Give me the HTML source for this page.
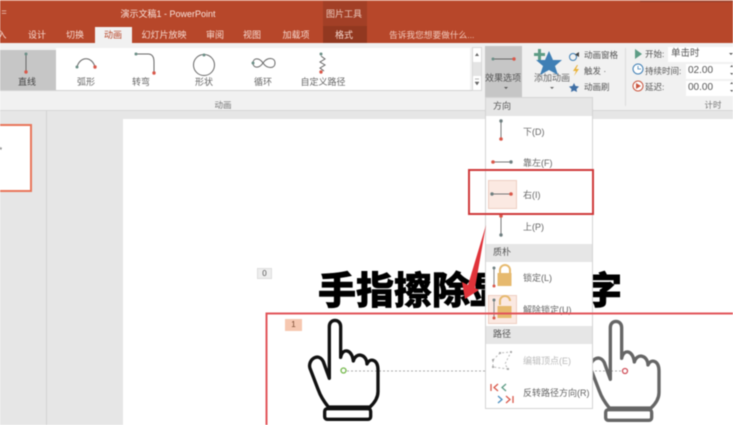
<!DOCTYPE html>
<html><head><meta charset="utf-8">
<style>
html,body{margin:0;padding:0;background:#fff}
#p{position:relative;width:733px;height:425px;overflow:hidden;background:#e6e6e6;font-family:"Liberation Sans","Noto Sans CJK SC",sans-serif;filter:blur(.4px)}
#p div{position:absolute}
.t{white-space:nowrap;line-height:14px;height:14px;transform:translate(-50%,calc(-50% + 1px))}
.l{white-space:nowrap;line-height:14px;height:14px;transform:translateY(calc(-50% + 1px))}
.tab{font-size:9px;color:#f6d8ce;top:34px}
.rb{font-size:9px;color:#666;top:81px}
.m{font-size:9px;color:#666;left:523px}
.h{left:486px;width:106px;height:18px;background:#e6e6e6;font-size:9px;color:#555;line-height:17px;text-indent:7px}
.r{font-size:8.500px;color:#555}
</style></head><body>
<div id="p">
<!-- title bar -->
<div style="left:0;top:0;width:733px;height:43px;background:#b7472a"></div>
<div style="left:0;top:0;width:733px;height:1px;background:#d98f78"></div>
<div style="left:640px;top:1px;width:93px;height:1px;background:#8f3a25"></div>
<div style="left:323px;top:1px;width:44px;height:25px;background:#a23f26"></div>
<div style="left:323px;top:26px;width:44px;height:17px;background:#923820"></div>
<div style="left:95px;top:27px;width:37px;height:19px;background:#f1f1f1"></div>
<div class="t" style="left:4px;top:11px;font-size:9px;color:#f6d8ce">=</div>
<div class="t" style="left:168px;top:13px;font-size:9px;color:#f8e3dc">演示文稿1 - PowerPoint</div>
<div class="t" style="left:344px;top:13px;font-size:9px;color:#eccabd">图片工具</div>
<div class="t tab" style="left:2px">入</div>
<div class="t tab" style="left:37px">设计</div>
<div class="t tab" style="left:75px">切换</div>
<div class="t tab" style="left:113px;color:#b7472a">动画</div>
<div class="t tab" style="left:164px">幻灯片放映</div>
<div class="t tab" style="left:215px">审阅</div>
<div class="t tab" style="left:252px">视图</div>
<div class="t tab" style="left:296px">加载项</div>
<div class="t tab" style="left:344px">格式</div>
<div class="l" style="left:389px;top:34px;font-size:8.700px;color:#f2c9bb">告诉我您想要做什么...</div>
<!-- ribbon -->
<div style="left:0;top:43px;width:733px;height:67px;background:#f1f1f1"></div>
<div style="left:0;top:110px;width:733px;height:1px;background:#d6d6d6"></div>
<div style="left:0;top:50px;width:56px;height:40px;background:#c6c6c6"></div>
<div style="left:56px;top:48px;width:414px;height:42px;background:#fff"></div>
<div style="left:0;top:90px;width:472px;height:1px;background:#d2d2d2"></div>
<div style="left:472px;top:47px;width:10px;height:44px;background:#fff;border:1px solid #d8d8d8;box-sizing:border-box"></div>
<div style="left:473px;top:62px;width:8px;height:14px;background:#e4e4e4"></div>
<div style="left:485px;top:46px;width:37px;height:51px;background:#c6c6c6"></div>
<div style="left:625px;top:48px;width:1px;height:58px;background:#dcdcdc"></div>
<div style="left:668px;top:47px;width:65px;height:15px;background:#fff"></div>
<div style="left:686px;top:64px;width:47px;height:15px;background:#fff"></div>
<div style="left:686px;top:81px;width:47px;height:15px;background:#fff"></div>
<div class="t" style="left:27px;top:81px;font-size:9px;color:#444">直线</div>
<div class="t rb" style="left:86px">弧形</div>
<div class="t rb" style="left:141px">转弯</div>
<div class="t rb" style="left:204px">形状</div>
<div class="t rb" style="left:263px">循环</div>
<div class="t rb" style="left:323px">自定义路径</div>
<div class="t" style="left:223px;top:104px;font-size:8.500px;color:#777">动画</div>
<div class="t" style="left:713px;top:104px;font-size:8.500px;color:#777">计时</div>
<div class="t" style="left:503px;top:77px;font-size:9px;color:#555">效果选项</div>
<div class="t" style="left:552px;top:77px;font-size:9px;color:#666">添加动画</div>
<div class="l r" style="left:584px;top:54px">动画窗格</div>
<div class="l r" style="left:584px;top:70px">触发 ·</div>
<div class="l r" style="left:584px;top:86px">动画刷</div>
<div class="l r" style="left:645px;top:53px">开始:</div>
<div class="l r" style="left:671px;top:53px;font-size:9.500px">单击时</div>
<div class="l r" style="left:645px;top:70px">持续时间:</div>
<div class="l r" style="left:688px;top:70px;font-size:10px">02.00</div>
<div class="l r" style="left:645px;top:86px">延迟:</div>
<div class="l r" style="left:688px;top:87px;font-size:10px">00.00</div>
<!-- workspace -->
<div style="left:46px;top:111px;width:1px;height:314px;background:#d4d4d4"></div>
<div style="left:0;top:124px;width:30px;height:64px;background:#fff;border:2px solid #e8765a;border-left:0"></div>
<div class="l" style="left:-1px;top:150px;font-size:8px;color:#555">*</div>
<div style="left:123px;top:119px;width:610px;height:306px;background:#fff"></div>
<div class="l" style="left:318px;top:291px;height:48px;line-height:48px;font-size:38px;font-weight:900;color:#000;-webkit-text-stroke:.6px #000">手指擦除显示文字</div>
<div style="left:257px;top:268px;width:15px;height:11px;background:#eee;border:1px solid #ddd;box-sizing:border-box;font-size:8px;line-height:9px;text-align:center;color:#555">0</div>
<div style="left:285px;top:319px;width:17px;height:12px;background:#f6c7b0;font-size:8px;line-height:12px;text-align:center;color:#7a4a30">1</div>

<svg width="733" height="425" style="position:absolute;left:0;top:0">
 <defs>
  <path id="hand" d="M238 355V200C238 175 272 175 272 200V292C278 262 306 268 310 303C318 275 350 282 351 312C360 292 384 298 384 330V395C384 415 372 430 360 441H235C222 425 212 410 205 390L180 325C172 300 205 275 220 305Z"/>
 </defs>
 <line x1="343" y1="371" x2="625" y2="371" stroke="#aaa" stroke-width="1" stroke-dasharray="2 2"/>
 <g transform="translate(250 260) scale(.3333)" fill="none" stroke="#111" stroke-width="10" stroke-linejoin="round">
  <use href="#hand"/><rect x="224" y="446" width="138" height="32" rx="8"/>
 </g>
 <circle cx="343.500" cy="370.500" r="2.500" fill="#fff" stroke="#73b84a" stroke-width="1.300"/>
 <g transform="translate(531 261) scale(.3333)" fill="none" stroke="#666" stroke-width="10" stroke-linejoin="round">
  <use href="#hand"/><rect x="224" y="446" width="138" height="32" rx="8"/>
 </g>
 <circle cx="625" cy="371" r="2.500" fill="#fff" stroke="#d0505a" stroke-width="1.300"/>

 <g fill="none" stroke="#666" stroke-width="1">
  <line x1="26" y1="54" x2="26" y2="72"/>
  <path d="M77 67C80 56 92 56 95 67"/>
  <path d="M136 54H148C153 54 154 58 154 62V73"/>
  <circle cx="204" cy="65" r="10.500"/>
  <path d="M263 63C259 57 253 58 253 63C253 68 259 69 263 63C267 57 275 57 275 63C275 69 267 69 263 63Z"/>
  <path d="M321 56L325 59L320 62L325 65L320 68L324 71"/>
  <line x1="493" y1="59" x2="514" y2="59"/>
 </g>
 <g fill="#6b8f86">
  <circle cx="26" cy="54" r="1.500"/><circle cx="77" cy="67" r="1.500"/><circle cx="136" cy="54" r="1.500"/><circle cx="204" cy="55" r="1.500"/><circle cx="253" cy="63" r="1.500"/><circle cx="321" cy="54" r="1.500"/><circle cx="493" cy="59" r="1.500"/>
 </g>
 <g fill="#d9584a">
  <circle cx="26" cy="72" r="1.700"/><circle cx="95" cy="67" r="1.700"/><circle cx="154" cy="73" r="1.700"/><circle cx="321" cy="72" r="1.700"/><circle cx="514" cy="59" r="1.700"/>
 </g>
 <path d="M504 87h4l-2 2z" fill="#555"/>
 <path d="M550 87h4l-2 2z" fill="#666"/>
 <path d="M475 56l2-3 2 3z" fill="#666"/>
 <path d="M475 82l2 3 2-3zM475 79h4" fill="#666" stroke="#666" stroke-width=".5"/>
 <path d="M549 51L553 60L562 60L555 66L558 75L549 70L540 75L543 66L536 60L545 60Z" fill="#3f7fb5"/>
 <path d="M538 49h3v4h4v3h-4v4h-3v-4h-4v-3h4z" fill="#5d9c85"/>
 <circle cx="573" cy="57" r="3.500" fill="none" stroke="#3f7fb5"/>
 <path d="M579 52l-4 2.500 4 2.500z" fill="#444"/>
 <path d="M577 65l-4 6h3l-2 5 5-7h-3l2-4z" fill="#eab33a"/>
 <path d="M574 83l1.500 3 3.500 .5-2.500 2.500 .5 3-3-1.500-3 1.500 .5-3-2.500-2.500 3.500-.5z" fill="#3f6fa5"/>
 <path d="M635 49l7 5-7 5z" fill="#5d9c85"/>
 <circle cx="638" cy="69" r="5" fill="#fff" stroke="#3f7fb5"/><path d="M638 66v3h3" fill="none" stroke="#3f7fb5" stroke-width=".8"/>
 <circle cx="638" cy="86" r="5" fill="#fff" stroke="#c9553e"/><path d="M636 83l5 3-5 3z" fill="#c9553e"/>
 <path d="M729 53h4l-2 2z" fill="#555"/>
 <path d="M730 67l2-2 1 2zM730 73h3l-1 2zM730 84l2-2 1 2zM730 90h3l-1 2z" fill="#555"/>
</svg>

<!-- menu -->
<div style="left:485px;top:97px;width:108px;height:312px;background:#fff;border:1px solid #d4d4d4;box-sizing:border-box"></div>
<div class="h" style="top:98px">方向</div>
<div class="h" style="top:244px">质朴</div>
<div class="h" style="top:326px">路径</div>
<div style="left:488px;top:180px;width:29px;height:29px;background:#fbe9e2;border:1px solid #eecfc2;box-sizing:border-box"></div>
<div style="left:488px;top:295px;width:29px;height:29px;background:#fbe9e2;border:1px solid #eecfc2;box-sizing:border-box"></div>
<div class="l m" style="top:131px">下(D)</div>
<div class="l m" style="top:162px">靠左(F)</div>
<div class="l m" style="top:194px">右(I)</div>
<div class="l m" style="top:226px">上(P)</div>
<div class="l m" style="top:277px">锁定(L)</div>
<div class="l m" style="top:309px">解除锁定(U)</div>
<div class="l m" style="top:360px;color:#bbb">编辑顶点(E)</div>
<div class="l m" style="top:392px">反转路径方向(R)</div>

<svg width="733" height="425" style="position:absolute;left:0;top:0">
 <g fill="none" stroke="#777" stroke-width="1">
  <line x1="501" y1="121" x2="501" y2="139"/>
  <line x1="493" y1="162" x2="511" y2="162"/>
  <line x1="492" y1="194" x2="511" y2="194"/>
  <line x1="501" y1="216" x2="501" y2="235"/>
 </g>
 <g fill="#6f7f80"><circle cx="501" cy="121" r="1.700"/><circle cx="511" cy="162" r="1.700"/><circle cx="492" cy="194" r="1.700"/><circle cx="501" cy="235" r="1.700"/></g>
 <g fill="#d9584a"><circle cx="501" cy="139" r="1.800"/><circle cx="493" cy="162" r="1.800"/><circle cx="511" cy="194" r="1.800"/><circle cx="501" cy="216" r="1.800"/></g>
 <line x1="494" y1="268" x2="494" y2="286" stroke="#888"/><circle cx="494" cy="268" r="1.500" fill="#6f7f80"/><circle cx="494" cy="286" r="1.500" fill="#d9584a"/>
 <path d="M500 273v-3a5 5 0 0 1 10 0v3" fill="none" stroke="#e6b96e" stroke-width="2"/><rect x="497.500" y="273" width="14" height="13" fill="#e6b96e"/>
 <line x1="494" y1="300" x2="494" y2="318" stroke="#888"/><circle cx="494" cy="300" r="1.500" fill="#6f7f80"/><circle cx="494" cy="318" r="1.500" fill="#d9584a"/>
 <path d="M500 305v-4a5 5 0 0 1 10 0" fill="none" stroke="#e6b96e" stroke-width="2"/><rect x="497.500" y="306" width="14" height="12" fill="#e6b96e"/>
 <path d="M493 360L500 353L511 352L505 364L508 369L493 367Z" fill="none" stroke="#bbb" stroke-dasharray="2 2"/>
 <g fill="#aaa"><rect x="492" y="359" width="2" height="2"/><rect x="499" y="352" width="2" height="2"/><rect x="510" y="351" width="2" height="2"/><rect x="507" y="368" width="2" height="2"/><rect x="492" y="366" width="2" height="2"/></g>
 <g fill="none" stroke-width="1.300">
  <path d="M491 384v7M498 384l-4 3.500 4 3.500" stroke="#d9584a"/>
  <path d="M506 384l-4 3.500 4 3.500" stroke="#5d9c85"/>
  <path d="M498 396l4 3.500-4 3.500" stroke="#4a8fc0"/>
  <path d="M506 396l4 3.500-4 3.500M513 396v7" stroke="#d9584a"/>
 </g>
 <rect x="469" y="170" width="124" height="44" fill="none" stroke="#cf3a3c" stroke-width="2"/>
 <rect x="266.500" y="313.500" width="480" height="130" fill="none" stroke="#e2555a" stroke-width="2"/>
 <path d="M486 225L475 288L479 290L465 299L462 282L468 285Z" fill="#e0333a"/>
</svg>
</div>
</body></html>
